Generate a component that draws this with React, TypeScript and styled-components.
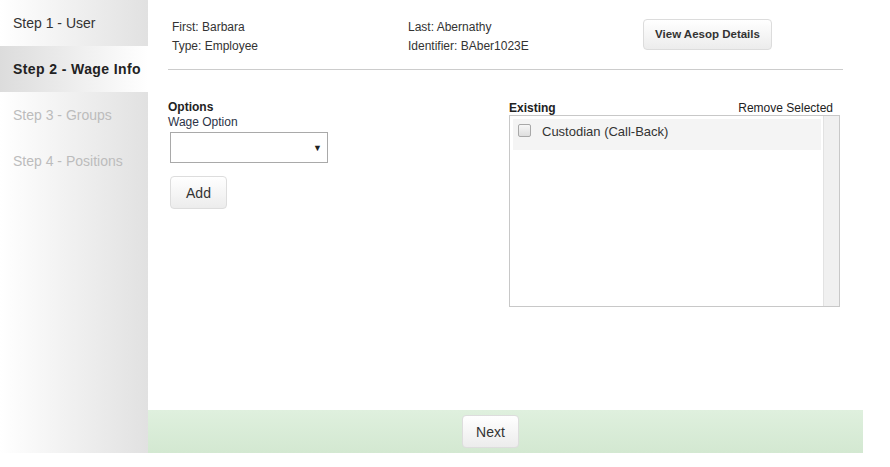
import React from "react";
import styled, { createGlobalStyle } from "styled-components";

const GlobalStyle = createGlobalStyle`
  html, body {
    margin: 0;
    padding: 0;
    background: #fff;
    font-family: "Liberation Sans", Arial, sans-serif;
    color: #333;
  }
`;

const steps = [
  { label: "Step 1 - User", state: "done" },
  { label: "Step 2 - Wage Info", state: "active" },
  { label: "Step 3 - Groups", state: "todo" },
  { label: "Step 4 - Positions", state: "todo" },
];

function App() {
  return (
    <>
      <GlobalStyle />
      <Page>
        <Sidebar>
          {steps.map((s) => (
            <StepItem key={s.label} $state={s.state}>
              {s.label}
            </StepItem>
          ))}
        </Sidebar>
        <Main>
          <Content>
            <Header>
              <InfoCol>
                <div>First: Barbara</div>
                <div>Type: Employee</div>
              </InfoCol>
              <InfoCol>
                <div>Last: Abernathy</div>
                <div>Identifier: BAber1023E</div>
              </InfoCol>
              <DetailsButton>View Aesop Details</DetailsButton>
            </Header>
            <Divider />
            <Columns>
              <OptionsCol>
                <SectionTitle>Options</SectionTitle>
                <FieldLabel>Wage Option</FieldLabel>
                <SelectBox>
                  <Arrow>▼</Arrow>
                </SelectBox>
                <Button $w={57}>Add</Button>
              </OptionsCol>
              <ExistingCol>
                <ExistingHead>
                  <SectionTitle>Existing</SectionTitle>
                  <RemoveLink>Remove Selected</RemoveLink>
                </ExistingHead>
                <ListBox>
                  <ListInner>
                    <ListRow>
                      <Check />
                      <span>Custodian (Call-Back)</span>
                    </ListRow>
                  </ListInner>
                  <Scrollbar />
                </ListBox>
              </ExistingCol>
            </Columns>
          </Content>
          <Footer>
            <Button $w={57}>Next</Button>
          </Footer>
        </Main>
      </Page>
    </>
  );
}

const Page = styled.div`
  display: flex;
  width: 863px;
  height: 453px;
`;

const Sidebar = styled.div`
  width: 148px;
  flex-shrink: 0;
  background: linear-gradient(to right, #ffffff, #e1e1e1);
  display: flex;
  flex-direction: column;
`;

const StepItem = styled.div<{ $state: string }>`
  height: 46px;
  padding-left: 13px;
  display: flex;
  align-items: center;
  font-size: 14px;
  font-weight: ${(p) => (p.$state === "active" ? 700 : 400)};
  letter-spacing: ${(p) => (p.$state === "active" ? "0.4px" : "0")};
  color: ${(p) =>
    p.$state === "active" ? "#222" : p.$state === "done" ? "#333" : "#bcbcbc"};
  background: ${(p) =>
    p.$state === "active"
      ? "linear-gradient(to right, #dcdcdc, #ffffff)"
      : "transparent"};
`;

const Main = styled.div`
  width: 715px;
  display: flex;
  flex-direction: column;
`;

const Content = styled.div`
  flex: 1;
  padding: 0 20px;
`;

const Header = styled.div`
  display: grid;
  grid-template-columns: 236px 235px auto;
  align-items: start;
  padding: 18px 0 0 4px;
  height: 51px;
  box-sizing: border-box;
  font-size: 12px;
  line-height: 19px;
`;

const InfoCol = styled.div`
  display: flex;
  flex-direction: column;
`;

const DetailsButton = styled.div`
  width: 129px;
  height: 31px;
  margin-top: 1px;
  box-sizing: border-box;
  border: 1px solid #dcdcdc;
  border-radius: 4px;
  background: linear-gradient(#ffffff, #ececec);
  font-size: 11.5px;
  font-weight: 700;
  color: #333;
  display: flex;
  align-items: center;
  justify-content: center;
`;

const Divider = styled.div`
  height: 1px;
  background: #cccccc;
  margin-top: 18px;
`;

const Columns = styled.div`
  display: grid;
  grid-template-columns: 341px 331px;
  margin-top: 30px;
`;

const OptionsCol = styled.div`
  display: flex;
  flex-direction: column;
  align-items: flex-start;
`;

const SectionTitle = styled.div`
  font-size: 12px;
  font-weight: 700;
  line-height: 14px;
  color: #222;
`;

const FieldLabel = styled.div`
  font-size: 12px;
  line-height: 16px;
  color: #2c3347;
`;

const SelectBox = styled.div`
  width: 158px;
  height: 31px;
  box-sizing: border-box;
  margin: 2px 0 13px 2px;
  border: 1px solid #a9a9a9;
  background: #fff;
  display: flex;
  align-items: center;
  justify-content: flex-end;
  padding-right: 5px;
`;

const Arrow = styled.span`
  font-size: 9px;
  color: #222;
`;

const Button = styled.div<{ $w: number }>`
  width: ${(p) => p.$w}px;
  height: 33px;
  box-sizing: border-box;
  margin-left: 2px;
  border: 1px solid #dddddd;
  border-radius: 4px;
  background: linear-gradient(#ffffff, #ececec);
  font-size: 14px;
  color: #333;
  display: flex;
  align-items: center;
  justify-content: center;
`;

const ExistingCol = styled.div`
  display: flex;
  flex-direction: column;
`;

const ExistingHead = styled.div`
  display: flex;
  justify-content: space-between;
  align-items: flex-end;
  padding-right: 7px;
  height: 15px;
`;

const RemoveLink = styled.span`
  font-size: 12px;
  line-height: 14px;
  color: #222;
`;

const ListBox = styled.div`
  height: 192px;
  box-sizing: border-box;
  border: 1px solid #c8c8c8;
  display: flex;
`;

const ListInner = styled.div`
  flex: 1;
  padding: 3px 2px 3px 3px;
`;

const ListRow = styled.div`
  height: 31px;
  box-sizing: border-box;
  background: #f4f4f4;
  display: flex;
  align-items: flex-start;
  padding: 5px 0 0 5px;
  gap: 11px;
  font-size: 13px;
  line-height: 15px;
  color: #333;
`;

const Check = styled.span`
  width: 13px;
  height: 13px;
  box-sizing: border-box;
  border: 1px solid #a8a8a8;
  border-radius: 2px;
  background: linear-gradient(#f7f7f7, #dedede);
  margin-top: 0px;
`;

const Scrollbar = styled.div`
  width: 15px;
  background: #f0f0f0;
  border-left: 1px solid #e2e2e2;
`;

const Footer = styled.div`
  height: 43px;
  background: linear-gradient(#dff0de, #d3e8d1);
  display: flex;
  align-items: center;
  justify-content: center;
  padding-right: 32px;
`;

export default App;
